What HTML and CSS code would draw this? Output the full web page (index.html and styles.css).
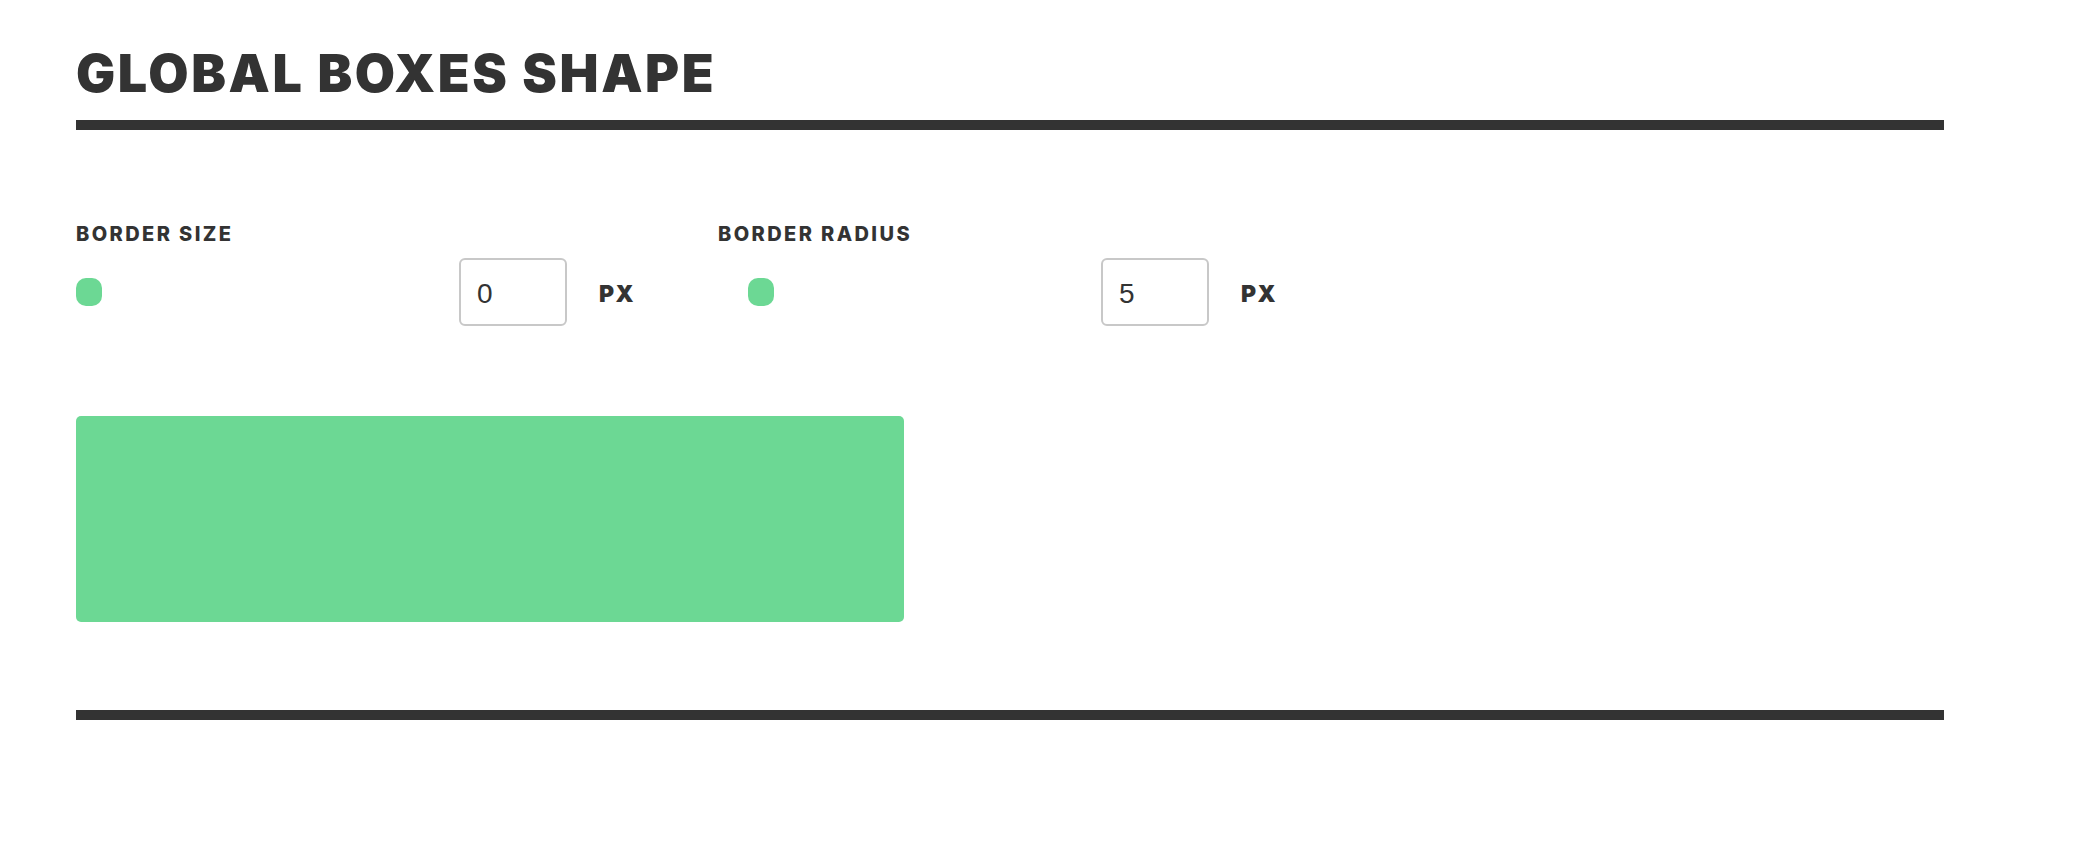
FILE: index.html
```html
<!DOCTYPE html>
<html lang="en">
<head>
    <meta charset="UTF-8">
    <meta name="viewport" content="width=device-width, initial-scale=1.0">
    <title>Global Boxes Shape</title>
    <link rel="stylesheet" href="styles.css">
</head>
<body>
    <div class="section">
        <h1>Global Boxes Shape</h1>
        <div class="rule"></div>

        <div class="controls">
            <div class="control">
                <label for="border-size">Border Size</label>
                <div class="control-row">
                    <input type="range" id="border-size" class="slider" min="0" max="55" value="0">
                    <input type="number" id="border-size-value" class="num" value="0">
                    <span class="unit">px</span>
                </div>
            </div>
            <div class="control">
                <label for="border-radius">Border Radius</label>
                <div class="control-row">
                    <input type="range" id="border-radius" class="slider" min="0" max="55" value="5">
                    <input type="number" id="border-radius-value" class="num" value="5">
                    <span class="unit">px</span>
                </div>
            </div>
        </div>

        <div class="preview" id="preview"></div>
        <div class="rule"></div>
    </div>

    <script>
        const preview = document.getElementById('preview');

        // スライダーと数値入力を連動させる
        function bind(sliderId, inputId, prop) {
            const slider = document.getElementById(sliderId);
            const input = document.getElementById(inputId);
            slider.addEventListener('input', function () {
                input.value = slider.value;
                preview.style[prop] = slider.value + 'px';
            });
            input.addEventListener('input', function () {
                slider.value = input.value;
                preview.style[prop] = input.value + 'px';
            });
        }

        bind('border-size', 'border-size-value', 'borderWidth');
        bind('border-radius', 'border-radius-value', 'borderRadius');
    </script>
</body>
</html>
```

FILE: styles.css
```css
body {
    font-family: Inter, "DejaVu Sans", sans-serif;
    margin: 0;
    padding: 0;
    background: #ffffff;
    color: #333;
}
.section {
    width: 1868px;
    margin-left: 76px;
}
h1 {
    margin: 42px 0 0;
    font-size: 52px;
    line-height: 64px;
    font-weight: 900;
    letter-spacing: 2.6px;
    text-transform: uppercase;
    color: #333;
}
.rule {
    height: 10px;
    background: #333;
    margin-top: 14px;
}
.controls {
    display: grid;
    grid-template-columns: 642px 642px;
    margin-top: 92px;
}
.control label {
    display: block;
    font-size: 20px;
    line-height: 24px;
    font-weight: 800;
    letter-spacing: 2.4px;
    text-transform: uppercase;
}
.control-row {
    display: flex;
    align-items: center;
    margin-top: 12px;
}
.slider {
    -webkit-appearance: none;
    appearance: none;
    width: 356px;
    height: 28px;
    margin: 0 27px 0 0;
    background: transparent;
}
.slider::-webkit-slider-runnable-track {
    height: 28px;
    background: transparent;
}
.slider::-webkit-slider-thumb {
    -webkit-appearance: none;
    width: 26px;
    height: 28px;
    border: none;
    border-radius: 10px;
    background: #6cd894;
}
.num {
    box-sizing: border-box;
    width: 108px;
    height: 68px;
    padding: 3px 16px 0;
    border: 2px solid #c8c8c8;
    border-radius: 6px;
    font-family: "Liberation Sans", Arial, sans-serif;
    font-size: 28px;
    color: #333;
    -moz-appearance: textfield;
}
.num::-webkit-inner-spin-button,
.num::-webkit-outer-spin-button {
    -webkit-appearance: none;
    margin: 0;
}
.unit {
    margin-left: 32px;
    padding-top: 3px;
    font-size: 23px;
    font-weight: 900;
    letter-spacing: 1.5px;
    text-transform: uppercase;
}
.preview {
    width: 828px;
    height: 206px;
    margin-top: 90px;
    background: #6cd894;
    border: 0 solid #333;
    border-radius: 5px;
    box-sizing: border-box;
}
.preview + .rule {
    margin-top: 88px;
}
```
